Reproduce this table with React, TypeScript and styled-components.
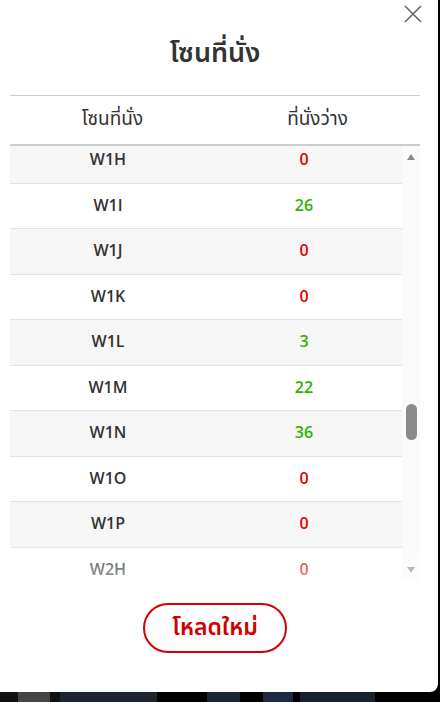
import React from 'react';
import styled, { createGlobalStyle } from 'styled-components';

const FONT = `"Open Sans", "Noto Sans", "Noto Sans Thai", sans-serif`;

const GlobalStyle = createGlobalStyle`
  html, body {
    margin: 0;
    padding: 0;
    background: #000;
  }
  * {
    box-sizing: border-box;
  }
`;

const Page = styled.div`
  width: 440px;
  height: 702px;
  overflow: hidden;
  display: flex;
  flex-direction: column;
  font-family: ${FONT};
`;

const Modal = styled.div`
  position: relative;
  width: 438px;
  height: 692px;
  flex-shrink: 0;
  padding-right: 8px;
  background: #fff;
  border-radius: 0 0 8px 0;
  display: flex;
  flex-direction: column;
`;

const CloseButton = styled.button`
  position: absolute;
  top: 5px;
  right: 16px;
  width: 18px;
  height: 18px;
  padding: 0;
  border: none;
  background: none;
  display: flex;
`;

const Title = styled.h2`
  margin: 0;
  padding-top: 30px;
  height: 95px;
  text-align: center;
  font-size: 27px;
  line-height: 44px;
  font-weight: 600;
  color: #333;
`;

const Table = styled.div`
  width: 410px;
  margin-left: 10px;
  border-top: 1px solid #cfcfcf;
`;

const HeadRow = styled.div`
  display: grid;
  grid-template-columns: 1fr 1fr;
  height: 50px;
  border-bottom: 2px solid #cccccc;
  align-items: center;
`;

const HeadCell = styled.div`
  text-align: center;
  font-size: 19px;
  color: #333;
  padding-bottom: 2px;
`;

const Body = styled.div`
  position: relative;
  display: flex;
  height: 435px;
`;

const Viewport = styled.div`
  flex: 1;
  overflow: hidden;
`;

const ListInner = styled.div<{ $offset: number }>`
  margin-top: ${(p) => -p.$offset}px;
`;

const Row = styled.div<{ $shaded: boolean }>`
  display: grid;
  grid-template-columns: 1fr 1fr;
  align-items: center;
  height: 45.5px;
  border-bottom: 1px solid #e2e2e6;
  background: ${(p) => (p.$shaded ? '#f6f6f6' : '#fff')};
`;

const ZoneCell = styled.div`
  text-align: center;
  font-size: 16px;
  font-weight: 600;
  color: #333;
  padding-bottom: 2px;
`;

const SeatCell = styled.div<{ $available: boolean }>`
  text-align: center;
  font-size: 16px;
  font-weight: 600;
  padding-bottom: 2px;
  color: ${(p) => (p.$available ? '#33b000' : '#e00000')};
`;

const ScrollBar = styled.div`
  width: 18px;
  background: #fafafa;
  display: flex;
  flex-direction: column;
  align-items: center;
`;

const Arrow = styled.div<{ $down?: boolean }>`
  width: 0;
  height: 0;
  margin: 8px 0;
  border-left: 4.5px solid transparent;
  border-right: 4.5px solid transparent;
  ${(p) =>
    p.$down ? 'border-top: 6px solid #8a8a8a;' : 'border-bottom: 6px solid #8a8a8a;'}
`;

const Track = styled.div`
  flex: 1;
  width: 100%;
  display: flex;
  justify-content: center;
`;

const Thumb = styled.div<{ $top: number }>`
  margin-top: ${(p) => p.$top}px;
  width: 11px;
  height: 36px;
  border-radius: 6px;
  background: #8a8a8a;
`;

const Fade = styled.div`
  position: absolute;
  left: 0;
  right: 0;
  bottom: 0;
  height: 40px;
  pointer-events: none;
  background: linear-gradient(rgba(255, 255, 255, 0), rgba(255, 255, 255, 0.55));
`;

const Footer = styled.div`
  display: flex;
  justify-content: center;
  padding-top: 22px;
`;

const ReloadButton = styled.button`
  width: 144px;
  height: 50px;
  border: 2px solid #d60000;
  border-radius: 25px;
  background: #fff;
  color: #d10000;
  font-family: ${FONT};
  font-size: 23px;
  font-weight: 600;
  padding: 0 0 2px;
`;

const Backdrop = styled.div`
  flex: 1;
  display: flex;
  background: #000;
`;

const BackBlock = styled.div<{ $w: number; $bg: string; $ml?: number }>`
  width: ${(p) => p.$w}px;
  margin-left: ${(p) => p.$ml || 0}px;
  background: ${(p) => p.$bg};
`;

const seats: [string, number][] = [
  ['W1H', 0],
  ['W1I', 26],
  ['W1J', 0],
  ['W1K', 0],
  ['W1L', 3],
  ['W1M', 22],
  ['W1N', 36],
  ['W1O', 0],
  ['W1P', 0],
  ['W2H', 0],
];

const CloseIcon = () => (
  <svg width="18" height="18" viewBox="0 0 18 18">
    <path d="M1 1 L17 17 M17 1 L1 17" stroke="#666" strokeWidth="1.6" fill="none" />
  </svg>
);

export default function App() {
  return (
    <>
      <GlobalStyle />
      <Page>
        <Modal>
          <CloseButton aria-label="close">
            <CloseIcon />
          </CloseButton>
          <Title>โซนที่นั่ง</Title>
          <Table>
            <HeadRow>
              <HeadCell>โซนที่นั่ง</HeadCell>
              <HeadCell>ที่นั่งว่าง</HeadCell>
            </HeadRow>
            <Body>
              <Viewport>
                <ListInner $offset={8}>
                  {seats.map(([zone, count], i) => (
                    <Row key={zone} $shaded={i % 2 === 0}>
                      <ZoneCell>{zone}</ZoneCell>
                      <SeatCell $available={count > 0}>{count}</SeatCell>
                    </Row>
                  ))}
                </ListInner>
              </Viewport>
              <ScrollBar>
                <Arrow />
                <Track>
                  <Thumb $top={236} />
                </Track>
                <Arrow $down />
              </ScrollBar>
              <Fade />
            </Body>
          </Table>
          <Footer>
            <ReloadButton>โหลดใหม่</ReloadButton>
          </Footer>
        </Modal>
        <Backdrop>
          <BackBlock $w={18} $bg="#111" />
          <BackBlock $w={32} $bg="#444" />
          <BackBlock $w={10} $bg="#111" />
          <BackBlock $w={97} $bg="#1c2530" />
          <BackBlock $w={50} $bg="#000" />
          <BackBlock $w={33} $bg="#1b2631" />
          <BackBlock $w={23} $bg="#000" />
          <BackBlock $w={30} $bg="#1a2a40" />
          <BackBlock $w={75} $bg="#17222e" $ml={7} />
        </Backdrop>
      </Page>
    </>
  );
}
